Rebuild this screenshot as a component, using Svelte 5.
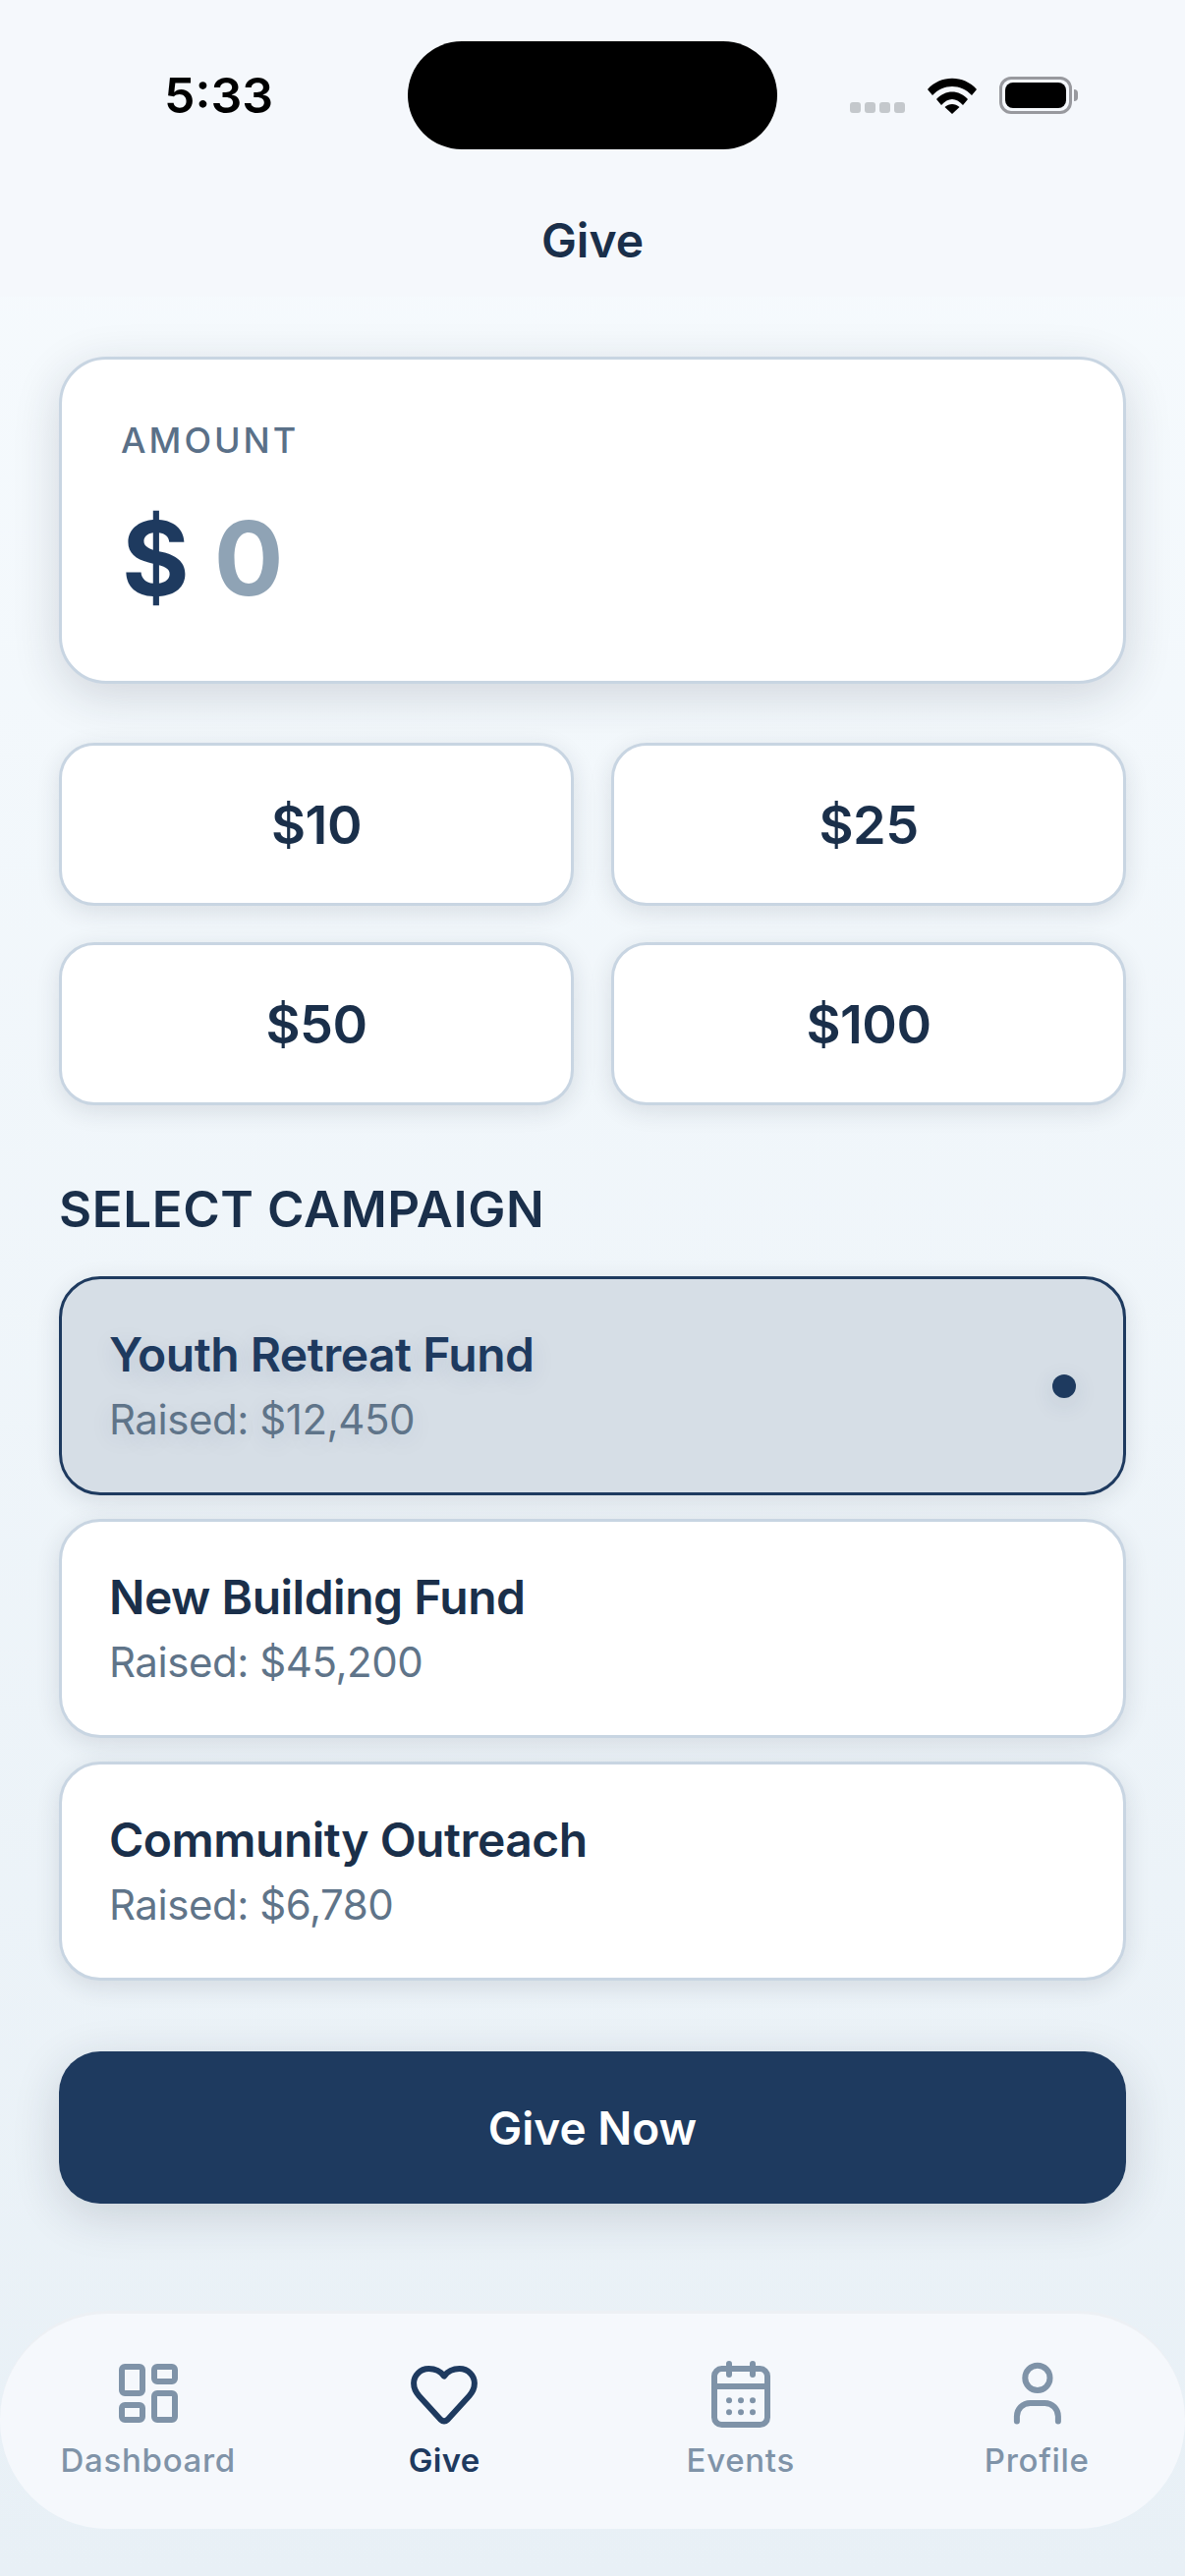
<script>
  const amounts = ['$10', '$25', '$50', '$100'];
  const campaigns = [
    { name: 'Youth Retreat Fund', raised: '$12,450', selected: true },
    { name: 'New Building Fund', raised: '$45,200', selected: false },
    { name: 'Community Outreach', raised: '$6,780', selected: false }
  ];
</script>

<div class="screen">
  <header class="top">
    <div class="status">
      <span class="time">5:33</span>
      <div class="island"></div>
      <div class="indicators">
        <div class="dots"><i></i><i></i><i></i><i></i></div>
        <svg class="wifi" width="52" height="38" viewBox="0 0 52 38">
          <path d="M1 13 C14 -2 38 -2 51 13 L46 19 C35 7 17 7 6 19 Z" fill="#000" />
          <path d="M10 23 C19 13 33 13 42 23 L37 29 C30 21 22 21 15 29 Z" fill="#000" />
          <path d="M18.500 31 C23 27 29 27 33.500 31 L26 38 Z" fill="#000" />
        </svg>
        <div class="battery"><div class="fill"></div></div>
      </div>
    </div>
    <h1>Give</h1>
  </header>

  <main class="content">
    <section class="amount-card">
      <div class="amount-label">AMOUNT</div>
      <div class="amount-value"><span class="cur">$</span> <span class="zero">0</span></div>
    </section>

    <div class="amounts">
      {#each amounts as a}
        <button class="amount-btn">{a}</button>
      {/each}
    </div>

    <h2>SELECT CAMPAIGN</h2>
    <div class="campaigns">
      {#each campaigns as c}
        <div class="campaign" class:selected={c.selected}>
          <div>
            <div class="c-name">{c.name}</div>
            <div class="c-raised">Raised: {c.raised}</div>
          </div>
          {#if c.selected}<span class="dot"></span>{/if}
        </div>
      {/each}
    </div>

    <button class="give-now">Give Now</button>
  </main>

  <nav class="tabs">
    <div class="tab">
      <svg width="72" height="72" viewBox="0 0 24 24" fill="none" stroke="currentColor" stroke-width="2" stroke-linecap="round" stroke-linejoin="round">
        <rect x="3" y="3" width="7" height="9" rx="1" />
        <rect x="14" y="3" width="7" height="5" rx="1" />
        <rect x="14" y="12" width="7" height="9" rx="1" />
        <rect x="3" y="16" width="7" height="5" rx="1" />
      </svg>
      <span>Dashboard</span>
    </div>
    <div class="tab active">
      <svg width="72" height="72" viewBox="0 0 24 24" fill="none" stroke="currentColor" stroke-width="2" stroke-linecap="round" stroke-linejoin="round">
        <path d="M12 6.200 C10.800 4.600 8.800 3.700 6.800 3.700 C3.800 3.700 1.700 6 1.700 8.600 C1.700 10.400 2.400 11.700 3.500 12.900 L10.800 20.900 Q12 22 13.200 20.900 L20.500 12.900 C21.600 11.700 22.300 10.400 22.300 8.600 C22.300 6 20.200 3.700 17.200 3.700 C15.200 3.700 13.200 4.600 12 6.200 Z" />
      </svg>
      <span>Give</span>
    </div>
    <div class="tab">
      <svg width="72" height="72" viewBox="0 0 24 24" fill="none" stroke="currentColor" stroke-width="2" stroke-linecap="round" stroke-linejoin="round">
        <rect x="3" y="3.700" width="18" height="19" rx="2.500" />
        <path d="M8 2v3.700M16 2v3.700M3 9.700h18" />
        <path d="M8 14.400h.01M12 14.400h.01M16 14.400h.01M8 18.400h.01M12 18.400h.01M16 18.400h.01" />
      </svg>
      <span>Events</span>
    </div>
    <div class="tab">
      <svg width="72" height="72" viewBox="0 0 24 24" fill="none" stroke="currentColor" stroke-width="2" stroke-linecap="round" stroke-linejoin="round">
        <path d="M5.300 21.500v-1.700a4.500 4.500 0 0 1 4.500-4.500h5a4.500 4.500 0 0 1 4.500 4.500v1.700" />
        <circle cx="12.300" cy="6.800" r="4.200" />
      </svg>
      <span>Profile</span>
    </div>
  </nav>
</div>

<style>
  :global(body) {
    margin: 0;
    background: #e8f0f6;
  }
  .screen {
    width: 1206px;
    height: 2622px;
    overflow: hidden;
    font-family: Inter, "Liberation Sans", sans-serif;
    background: linear-gradient(180deg, #f7fbfe 0%, #e8f0f6 100%);
  }
  .top {
    height: 302px;
    background: #f5f8fc;
    box-sizing: border-box;
    padding-top: 42px;
  }
  .status {
    display: grid;
    grid-template-columns: 415px 376px 1fr;
    height: 110px;
  }
  .time {
    font-size: 50px;
    font-weight: 600;
    color: #000;
    padding-left: 167px;
    line-height: 110px;
  }
  .island {
    background: #000;
    border-radius: 56px;
  }
  .indicators {
    display: flex;
    align-items: flex-start;
    padding: 36px 0 0 74px;
  }
  .dots {
    display: flex;
    gap: 4px;
    margin-top: 26px;
    margin-right: 22px;
  }
  .dots i {
    width: 11px;
    height: 11px;
    border-radius: 3px;
    background: #c4c8cc;
  }
  .wifi {
    margin-right: 22px;
  }
  .battery {
    position: relative;
    width: 74px;
    height: 38px;
    box-sizing: border-box;
    border: 3px solid #98999e;
    border-radius: 12px;
    padding: 3px;
  }
  .battery::after {
    content: '';
    position: absolute;
    right: -9px;
    top: 10px;
    width: 4px;
    height: 12px;
    background: #98999e;
    border-radius: 0 4px 4px 0;
  }
  .fill {
    height: 100%;
    background: #000;
    border-radius: 8px;
  }
  h1 {
    margin: 63px 0 0;
    text-align: center;
    font-size: 48px;
    line-height: 60px;
    font-weight: 600;
    color: #1a2f4a;
  }
  .content {
    padding: 61px 60px 0;
  }
  .amount-card {
    height: 333px;
    box-sizing: border-box;
    background: #fff;
    border: 3px solid #c8d5e2;
    border-radius: 48px;
    padding: 60px 60px 0 60px;
    box-shadow: 0 12px 48px rgba(30, 40, 55, 0.16);
  }
  .amount-label {
    font-size: 36px;
    line-height: 44px;
    font-weight: 500;
    letter-spacing: 3px;
    color: #5a7088;
  }
  .amount-value {
    margin-top: 33px;
    margin-left: 1px;
    font-size: 105px;
    line-height: 130px;
    font-weight: 700;
    color: #1e3a5f;
  }
  .zero {
    color: #8fa3b5;
  }
  .amounts {
    display: grid;
    grid-template-columns: 1fr 1fr;
    gap: 37px 38px;
    margin-top: 60px;
  }
  .amount-btn {
    height: 166px;
    background: #fff;
    border: 3px solid #c8d5e2;
    border-radius: 36px;
    font-family: inherit;
    font-size: 54px;
    font-weight: 600;
    letter-spacing: -0.500px;
    color: #1a2f4a;
    box-shadow: 0 6px 24px rgba(30, 40, 55, 0.12);
    padding: 0;
  }
  h2 {
    margin: 75px 0 0;
    font-size: 51px;
    line-height: 62px;
    font-weight: 600;
    letter-spacing: 0.600px;
    color: #1a2f4a;
  }
  .campaigns {
    display: flex;
    flex-direction: column;
    gap: 24px;
    margin-top: 37px;
  }
  .campaign {
    height: 223px;
    box-sizing: border-box;
    display: flex;
    align-items: center;
    justify-content: space-between;
    background: #fff;
    border: 3px solid #c8d5e2;
    border-radius: 42px;
    padding: 0 48px;
    box-shadow: 0 6px 24px rgba(30, 40, 55, 0.12);
  }
  .campaign.selected {
    background: #d6dee6;
    border-color: #1e3a5f;
  }
  .c-name {
    font-size: 48px;
    line-height: 60px;
    font-weight: 600;
    letter-spacing: -0.500px;
    color: #1a2f4a;
    margin-top: -1px;
  }
  .selected .c-name {
    color: #1e3a5f;
    text-shadow: 0 6px 24px rgba(30, 58, 95, 0.12);
  }
  .c-raised {
    margin-top: 9px;
    font-size: 42px;
    line-height: 54px;
    letter-spacing: -0.450px;
    color: #5f7489;
  }
  .selected .c-raised {
    text-shadow: 0 6px 24px rgba(30, 58, 95, 0.12);
  }
  .dot {
    width: 24px;
    height: 24px;
    border-radius: 50%;
    background: #1e3a5f;
    box-shadow: 0 6px 24px rgba(30, 58, 95, 0.12);
  }
  .give-now {
    display: block;
    width: 100%;
    height: 155px;
    margin-top: 72px;
    background: #1e3a5f;
    border: 0;
    border-radius: 42px;
    font-family: inherit;
    font-size: 46px;
    font-weight: 600;
    color: #fff;
    box-shadow: 0 12px 48px rgba(30, 40, 55, 0.16);
  }
  .tabs {
    display: grid;
    grid-template-columns: repeat(4, 1fr);
    height: 222px;
    margin-top: 109px;
    box-sizing: border-box;
    padding-top: 45px;
    background: #f5f8fc;
    border-top: 3px solid #edf0f4;
    border-radius: 110px;
  }
  .tab {
    display: flex;
    flex-direction: column;
    align-items: center;
    color: #7f93a8;
  }
  .tab.active {
    color: #1e3a5f;
  }
  .tab svg {
    display: block;
  }
  .tab span {
    margin-top: 12px;
    font-size: 33px;
    line-height: 40px;
    font-weight: 500;
    letter-spacing: 0.700px;
  }
  .tab.active span {
    font-weight: 600;
    letter-spacing: 0.300px;
  }
</style>
